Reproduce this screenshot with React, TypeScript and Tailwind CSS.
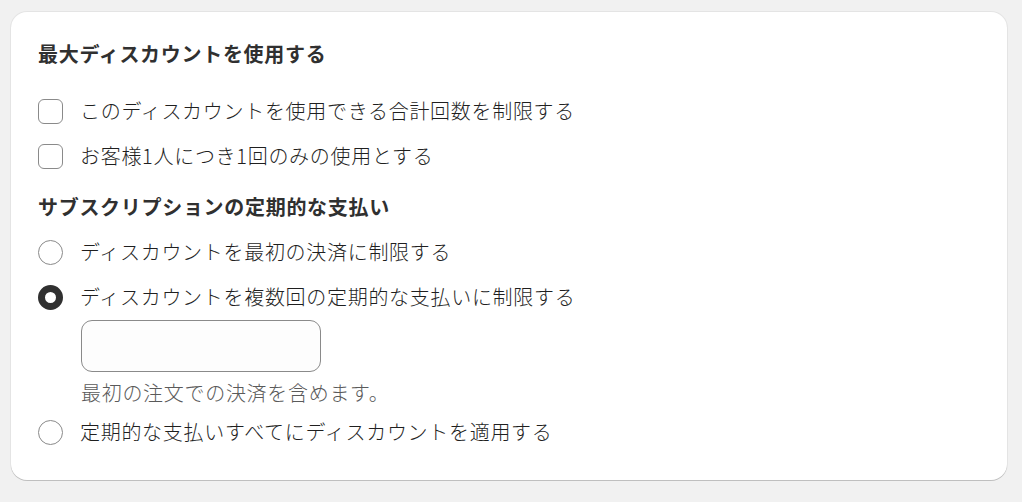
import React from "react";

const font = { fontFamily: '"Noto Sans CJK JP", "Noto Sans", sans-serif' };

function Checkbox({ label }: { label: React.ReactNode }) {
  return (
    <label className="flex items-center h-[32px] gap-[17px]">
      <span className="w-[25px] h-[25px] rounded-[6px] border border-[#8a8a8a] bg-white shrink-0" />
      <span className="text-[20px] leading-[32px] tracking-[0.7px] font-light text-[#1f1f1f]">{label}</span>
    </label>
  );
}

function Radio({ label, checked }: { label: string; checked?: boolean }) {
  return (
    <label className="flex items-center h-[32px] gap-[17px]">
      {checked ? (
        <span className="w-[25px] h-[25px] rounded-full border-[7px] border-[#303030] bg-white shrink-0" />
      ) : (
        <span className="w-[25px] h-[25px] rounded-full border border-[#8a8a8a] bg-white shrink-0" />
      )}
      <span className="text-[20px] leading-[32px] tracking-[0.7px] font-light text-[#1f1f1f]">{label}</span>
    </label>
  );
}

export default function App() {
  return (
    <div className="w-[1022px] h-[502px] bg-[#f1f1f1] pt-[12px] pl-[11px]" style={font}>
      <div className="w-[996px] h-[468px] bg-white rounded-[16px] shadow-[0_1px_0_rgba(0,0,0,0.16),0_0_0_1px_rgba(0,0,0,0.05)] pt-[26px] pl-[27px] pr-[27px]">
        <h2 className="text-[20px] leading-[32px] tracking-[0.7px] font-bold text-[#303030]">
          最大ディスカウントを使用する
        </h2>
        <div className="mt-[25px] flex flex-col gap-[13px]">
          <Checkbox label="このディスカウントを使用できる合計回数を制限する" />
          <Checkbox label="お客様1人につき1回のみの使用とする" />
        </div>
        <h2 className="mt-[19px] text-[20px] leading-[32px] tracking-[0.7px] font-bold text-[#303030]">
          サブスクリプションの定期的な支払い
        </h2>
        <div className="mt-[13px] flex flex-col gap-[13px]">
          <Radio label="ディスカウントを最初の決済に制限する" />
          <Radio label="ディスカウントを複数回の定期的な支払いに制限する" checked />
        </div>
        <div className="ml-[43px] mt-[7px]">
          <div className="w-[240px] h-[52px] rounded-[11px] border border-[#8a8a8a] bg-[#fdfdfd]" />
          <p className="mt-[7px] text-[20px] leading-[28px] tracking-[0.7px] font-light text-[#5a5a5a]">
            最初の注文での決済を含めます。
          </p>
        </div>
        <div className="mt-[9px]">
          <Radio label="定期的な支払いすべてにディスカウントを適用する" />
        </div>
      </div>
    </div>
  );
}
